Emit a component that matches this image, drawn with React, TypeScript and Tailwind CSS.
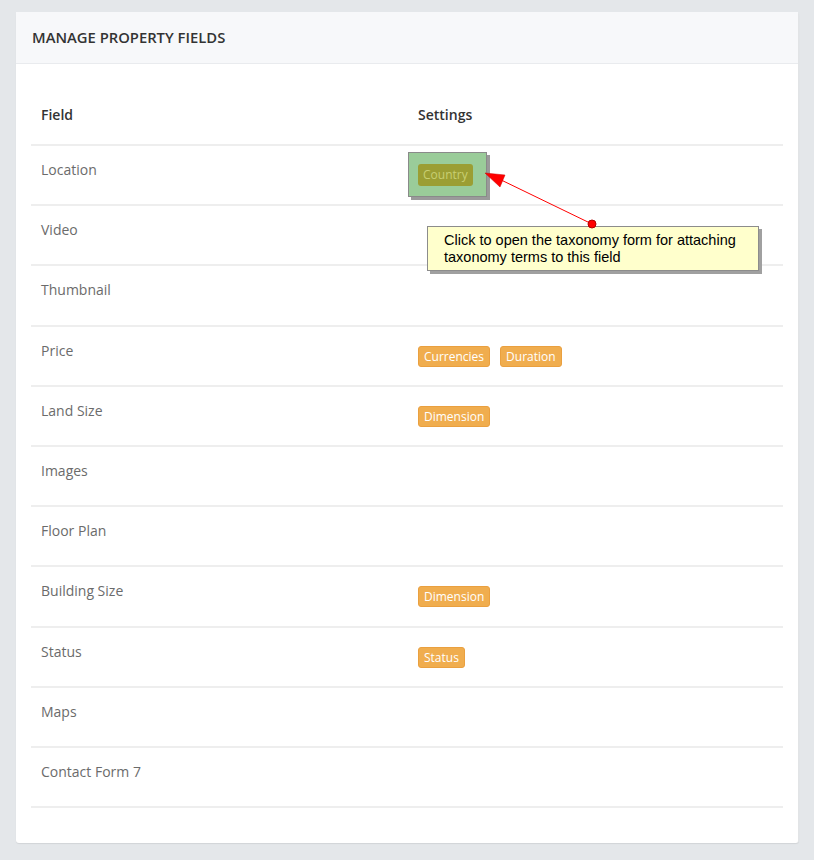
import React from "react";

const rows: { label: string; tags: string[]; h: string }[] = [
  { label: "Location", tags: [], h: "h-[60px]" },
  { label: "Video", tags: [], h: "h-[60px]" },
  { label: "Thumbnail", tags: [], h: "h-[61px]" },
  { label: "Price", tags: ["Currencies", "Duration"], h: "h-[60px]" },
  { label: "Land Size", tags: ["Dimension"], h: "h-[60px]" },
  { label: "Images", tags: [], h: "h-[60px]" },
  { label: "Floor Plan", tags: [], h: "h-[60px]" },
  { label: "Building Size", tags: ["Dimension"], h: "h-[61px]" },
  { label: "Status", tags: ["Status"], h: "h-[60px]" },
  { label: "Maps", tags: [], h: "h-[60px]" },
  { label: "Contact Form 7", tags: [], h: "h-[60px]" },
];

function Badge({ text }: { text: string }) {
  return (
    <span className="inline-flex h-[21px] items-center rounded-[3px] border border-[#eaa03f] bg-[#f0ad4e] px-[5px] text-[12px] leading-none text-white">
      {text}
    </span>
  );
}

export default function App() {
  return (
    <div
      className="relative min-h-[860px] bg-[#e4e7ea] pl-[16px] pr-[15px] pt-[12px] pb-[16px]"
      style={{ fontFamily: '"Open Sans", "Noto Sans", sans-serif' }}
    >
      <div className="rounded-[3px] border-r border-[#e2e4e6] bg-white shadow-[0_1px_1px_rgba(0,0,0,0.08)]">
        <div className="flex h-[52px] items-center border-b border-[#e9ebee] bg-[#f7f8fa] px-[16px]">
          <h1 className="text-[14.8px] font-semibold text-[#333]">MANAGE PROPERTY FIELDS</h1>
        </div>
        <div className="px-[15px] pb-[35px]">
          <div className="flex h-[80px] pt-[41px] text-[14px] font-semibold leading-[20px] text-[#333]">
            <div className="w-[377px] pl-[10px]">Field</div>
            <div className="pl-[10px]">Settings</div>
          </div>
          {rows.map((r) => (
            <div key={r.label} className={`flex border-t-2 border-[#eeeeee] ${r.h}`}>
              <div className="w-[377px] pl-[10px] pt-[14px] text-[14px] leading-[20px] text-[#6b6b6b]">{r.label}</div>
              <div className="relative flex flex-1 items-start gap-[10px] pl-[10px] pt-[19px]">
                {r.tags.map((t, i) => (
                  <Badge key={i} text={t} />
                ))}
                {r.label === "Location" && (
                  <div className="absolute left-0 top-[6px] flex h-[45px] w-[79px] items-center border border-[#8a8a8a] bg-[#9acc99] pl-[9px] shadow-[3px_3px_0_#9a9a9a]">
                    <span className="inline-flex h-[22px] items-center rounded-[3px] bg-[#9b9e33] px-[5px] text-[12px] leading-none text-[#c8cf72]">
                      Country
                    </span>
                  </div>
                )}
              </div>
            </div>
          ))}
          <div className="border-t-2 border-[#eeeeee]" />
        </div>
      </div>

      <div
        className="absolute left-[427px] top-[226px] w-[332px] border border-[#8c8c8c] bg-[#ffffcc] pl-[16px] pr-[8px] pt-[5px] pb-[4px] text-[14.5px] leading-[17px] text-black shadow-[3px_3px_0_#a0a0a0]"
        style={{ fontFamily: '"Liberation Sans", Arial, sans-serif' }}
      >
        Click to open the taxonomy form for attaching taxonomy terms to this field
      </div>

      <svg className="pointer-events-none absolute left-0 top-0" width="814" height="860">
        <line x1="592" y1="224" x2="495" y2="177" stroke="#ff0000" strokeWidth="1" />
        <polygon points="485,173 505,175 500,187" fill="#ff0000" stroke="#cc0000" strokeWidth="0.5" />
        <circle cx="592" cy="224" r="4" fill="#ff0000" stroke="#b00000" strokeWidth="1" />
      </svg>
    </div>
  );
}
